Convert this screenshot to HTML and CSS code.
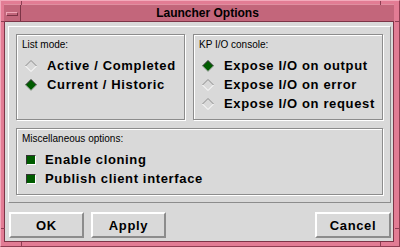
FILE: index.html
```html
<!DOCTYPE html>
<html lang="en">
<head>
    <meta charset="UTF-8">
    <title>Launcher Options</title>
    <link rel="stylesheet" href="styles.css">
</head>
<body>
    <div class="window">
        <!-- resize handle marks on the frame -->
        <div class="mark mark-h" style="top: 20px; left: 0;"></div>
        <div class="mark mark-h" style="top: 20px; right: 0;"></div>
        <div class="mark mark-h" style="top: 227px; left: 0;"></div>
        <div class="mark mark-h" style="top: 227px; right: 0;"></div>
        <div class="mark mark-v" style="left: 20px; top: 0;"></div>
        <div class="mark mark-v" style="left: 379px; top: 0;"></div>
        <div class="mark mark-v" style="left: 20px; bottom: 0;"></div>
        <div class="mark mark-v" style="left: 379px; bottom: 0;"></div>

        <div class="titlebar">
            <div class="menu-btn"><span class="menu-bar"></span></div>
            <div class="title">Launcher Options</div>
        </div>

        <div class="client">
            <div class="panel">
                <div class="panel-row">
                    <div class="group group-list">
                        <div class="group-label">List mode:</div>
                        <div class="options">
                            <div class="option">
                                <svg class="radio" width="12" height="12" viewBox="0 0 12 12"><path class="radio-lo" d="M0.5 6 L6 0.5 L11.5 6"/><path class="radio-hi" d="M11.5 6 L6 11.5 L0.5 6"/></svg>
                                <span>Active / Completed</span>
                            </div>
                            <div class="option">
                                <svg class="radio on" width="12" height="12" viewBox="0 0 12 12"><polygon class="radio-fill" points="6,0.5 11.5,6 6,11.5 0.5,6"/><path class="radio-lo" d="M0.5 6 L6 0.5 L11.5 6"/><path class="radio-hi" d="M11.5 6 L6 11.5 L0.5 6"/></svg>
                                <span>Current / Historic</span>
                            </div>
                        </div>
                    </div>
                    <div class="group group-kp">
                        <div class="group-label">KP I/O console:</div>
                        <div class="options">
                            <div class="option">
                                <svg class="radio on" width="12" height="12" viewBox="0 0 12 12"><polygon class="radio-fill" points="6,0.5 11.5,6 6,11.5 0.5,6"/><path class="radio-lo" d="M0.5 6 L6 0.5 L11.5 6"/><path class="radio-hi" d="M11.5 6 L6 11.5 L0.5 6"/></svg>
                                <span>Expose I/O on output</span>
                            </div>
                            <div class="option">
                                <svg class="radio" width="12" height="12" viewBox="0 0 12 12"><path class="radio-lo" d="M0.5 6 L6 0.5 L11.5 6"/><path class="radio-hi" d="M11.5 6 L6 11.5 L0.5 6"/></svg>
                                <span>Expose I/O on error</span>
                            </div>
                            <div class="option">
                                <svg class="radio" width="12" height="12" viewBox="0 0 12 12"><path class="radio-lo" d="M0.5 6 L6 0.5 L11.5 6"/><path class="radio-hi" d="M11.5 6 L6 11.5 L0.5 6"/></svg>
                                <span>Expose I/O on request</span>
                            </div>
                        </div>
                    </div>
                </div>
                <div class="group group-misc">
                    <div class="group-label">Miscellaneous options:</div>
                    <div class="options">
                        <div class="option">
                            <span class="check"></span>
                            <span>Enable cloning</span>
                        </div>
                        <div class="option">
                            <span class="check"></span>
                            <span>Publish client interface</span>
                        </div>
                    </div>
                </div>
            </div>

            <div class="buttons">
                <button class="btn">OK</button>
                <button class="btn">Apply</button>
                <span class="spacer"></span>
                <button class="btn btn-cancel">Cancel</button>
            </div>
        </div>
    </div>
</body>
</html>
```

FILE: styles.css
```css
body {
    margin: 0;
    width: 400px;
    height: 247px;
    overflow: hidden;
    font-family: 'Liberation Sans', Arial, sans-serif;
}

.window {
    position: relative;
    width: 400px;
    height: 247px;
    box-sizing: border-box;
    padding: 4px 5px 6px 4px;
    background: #e27c94;
    border-top: 1px solid #f2aabb;
    border-left: 1px solid #f2aabb;
    border-right: 1px solid #8e3e52;
    border-bottom: 1px solid #8e3e52;
    display: flex;
    flex-direction: column;
}

.mark {
    position: absolute;
    background: #8e3e52;
}

.mark-h {
    width: 4px;
    height: 1px;
}

.mark-v {
    width: 1px;
    height: 4px;
}

.titlebar {
    height: 16px;
    margin: -1px 0 0 -1px;
    display: flex;
    background: #c3667b;
    border-top: 1px solid #e08ea0;
    border-bottom: 1px solid #7c3446;
}

.menu-btn {
    width: 16px;
    border-right: 1px solid #7c3446;
    display: flex;
    align-items: center;
    justify-content: center;
}

.menu-bar {
    width: 10px;
    height: 2px;
    border-top: 1px solid #f0a8b8;
    border-left: 1px solid #f0a8b8;
    border-bottom: 1px solid #7c3446;
    border-right: 1px solid #7c3446;
    margin-top: 1px;
}

.title {
    flex: 1;
    text-align: center;
    font-size: 12px;
    font-weight: bold;
    line-height: 16px;
    color: #000;
}

.client {
    flex: 1;
    margin-left: -1px;
    display: flex;
    flex-direction: column;
    background: #d9d9d9;
    border-left: 1px solid #7c3446;
    border-right: 1px solid #7c3446;
    border-bottom: 1px solid #7c3446;
    padding: 4px 2px 3px 3px;
}

.panel {
    height: 177px;
    box-sizing: border-box;
    border-top: 1px solid #fff;
    border-left: 1px solid #fff;
    border-right: 1px solid #8c8c8c;
    border-bottom: 1px solid #8c8c8c;
    padding: 7px 7px 7px 7px;
    display: flex;
    flex-direction: column;
    gap: 8px;
}

.panel-row {
    display: flex;
    gap: 8px;
    height: 86px;
}

.group {
    box-sizing: border-box;
    border: 1px solid #8c8c8c;
    box-shadow: inset 1px 1px 0 #fff, 1px 1px 0 #fff;
    padding: 4px 0 0 5px;
}

.group-list {
    width: 169px;
}

.group-kp {
    flex: 1;
}

.group-misc {
    height: 67px;
}

.group-label {
    font-size: 10px;
    line-height: 12px;
    color: #000;
}

.options {
    margin-top: 5px;
}

.option {
    height: 19px;
    display: flex;
    align-items: center;
    font-size: 13px;
    font-weight: bold;
    letter-spacing: 0.65px;
    color: #000;
}

.radio {
    margin-left: 3px;
    margin-right: 10px;
    flex: none;
}

.radio path {
    fill: none;
    stroke-width: 1;
}

.radio-lo {
    stroke: #8c8c8c;
}

.radio-hi {
    stroke: #fff;
}

.radio.on .radio-lo {
    stroke: #333;
}

.radio.on .radio-hi {
    stroke: #b0b0b0;
}

.radio-fill {
    fill: #005c00;
}

.check {
    width: 8px;
    height: 8px;
    margin-left: 4px;
    margin-right: 9px;
    background: #005c00;
    border-top: 1px solid #333;
    border-left: 1px solid #333;
    border-right: 1px solid #fff;
    border-bottom: 1px solid #fff;
    flex: none;
}

.buttons {
    margin-top: 9px;
    height: 26px;
    display: flex;
    gap: 7px;
    padding-left: 1px;
}

.spacer {
    flex: 1;
}

.btn {
    width: 75px;
    height: 26px;
    box-sizing: border-box;
    background: #d9d9d9;
    border-top: 2px solid #fff;
    border-left: 2px solid #fff;
    border-right: 2px solid #8c8c8c;
    border-bottom: 2px solid #8c8c8c;
    font-family: 'Liberation Sans', Arial, sans-serif;
    font-size: 13px;
    font-weight: bold;
    letter-spacing: 0.65px;
    color: #000;
    padding: 0;
}

.btn-cancel {
    width: 76px;
}
```
